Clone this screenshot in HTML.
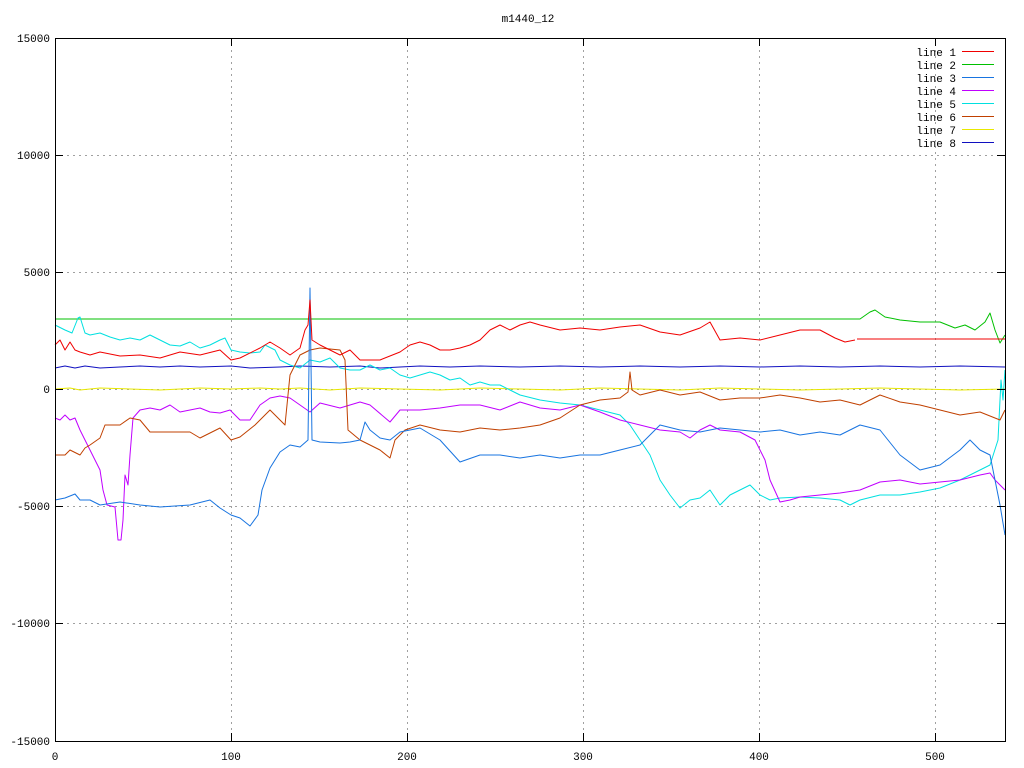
<!DOCTYPE html>
<html><head><style>body{margin:0;background:#fff}svg{display:block}text{font-family:"Liberation Mono",monospace;font-size:11px;fill:#000}</style></head><body>
<svg width="1024" height="768" viewBox="0 0 1024 768" xmlns="http://www.w3.org/2000/svg">
<rect width="1024" height="768" fill="#fff"/>
<g stroke="#a0a0a0" stroke-dasharray="2,4" stroke-width="1">
<line x1="55" y1="155.5" x2="1005" y2="155.5"/><line x1="55" y1="272.5" x2="1005" y2="272.5"/><line x1="55" y1="389.5" x2="1005" y2="389.5"/><line x1="55" y1="506.5" x2="1005" y2="506.5"/><line x1="55" y1="623.5" x2="1005" y2="623.5"/>
<line x1="231.5" y1="38" x2="231.5" y2="741"/><line x1="407.5" y1="38" x2="407.5" y2="741"/><line x1="583.5" y1="38" x2="583.5" y2="741"/><line x1="759.5" y1="38" x2="759.5" y2="741"/><line x1="935.5" y1="38" x2="935.5" y2="741"/>
</g>
<text x="528" y="22" text-anchor="middle">m1440_12</text>
<g text-anchor="end">
<text x="50" y="42">15000</text><text x="50" y="159">10000</text><text x="50" y="276">5000</text><text x="50" y="393">0</text><text x="50" y="510">-5000</text><text x="50" y="627">-10000</text><text x="50" y="745">-15000</text>
</g>
<g text-anchor="middle">
<text x="55" y="760">0</text><text x="231" y="760">100</text><text x="407" y="760">200</text><text x="583" y="760">300</text><text x="759" y="760">400</text><text x="935" y="760">500</text>
</g>
<g fill="none" stroke-width="1" stroke-linejoin="round">
<polyline stroke="#e8e800" points="55,389 70,388 80,390 100,388 130,389 160,390 200,388 231,389 260,388 280,389 300,388 330,390 360,388 400,389 440,390 480,388 520,389 560,390 600,388 640,389 680,390 720,388 760,389 800,390 840,389 880,388 920,389 960,390 1005,389"/>
<polyline stroke="#1010c0" points="55,368 65,366 75,368 85,366 100,368 120,367 140,366 160,367 180,366 200,367 231,366 250,368 280,367 300,366 330,367 360,366 380,368 400,367 420,366 450,367 480,366 520,367 560,366 600,367 640,366 680,367 720,366 760,367 800,366 840,367 880,366 920,367 960,366 1005,367"/>
<polyline stroke="#00c000" points="55,319 860,319 870,312 875,310 885,317 900,320 920,322 940,322 955,328 965,325 975,330 985,322 990,313 995,330 1000,343 1005,335"/>
<polyline stroke="#00e0e0" points="55,325 65,330 72,333 78,318 80,317 85,333 90,335 100,333 110,337 120,340 130,338 140,340 150,335 160,340 170,345 180,346 190,342 200,348 210,345 220,340 225,338 231,350 240,352 250,353 260,352 265,345 275,350 280,360 290,365 300,368 310,360 320,362 330,358 340,368 350,370 360,370 370,365 380,370 390,368 400,375 410,378 420,375 430,372 440,375 450,380 460,378 470,385 480,382 490,385 500,385 510,390 520,395 540,400 560,403 580,405 600,410 620,415 630,425 640,440 650,455 660,480 670,495 680,508 690,500 700,498 710,490 720,505 730,495 740,490 750,485 760,495 770,500 780,498 800,497 820,498 840,500 850,505 860,500 880,495 900,495 920,492 940,488 960,480 980,470 990,465 998,440 1001,380 1003,400 1005,370"/>
<polyline stroke="#c000ff" points="55,418 60,420 65,415 70,420 75,418 80,430 85,440 90,450 100,470 103,490 107,505 115,507 118,540 121,540 123,520 125,475 128,485 130,455 133,418 140,410 150,408 160,410 170,405 180,412 200,408 210,412 220,413 230,410 240,420 250,420 260,405 270,398 280,396 290,398 300,405 310,412 320,403 340,408 350,405 360,402 370,405 390,422 400,410 420,410 440,408 460,405 480,405 500,410 520,402 540,408 560,410 580,405 600,412 620,420 640,425 660,430 680,432 690,438 700,430 710,425 720,430 740,432 755,440 765,460 770,480 780,502 790,500 800,497 820,495 840,493 860,490 880,482 900,480 920,484 940,482 960,480 980,475 990,473 995,480 1000,485 1005,490"/>
<polyline stroke="#c04000" points="55,455 65,455 70,450 80,455 85,448 90,445 100,438 105,425 120,425 130,418 140,420 150,432 170,432 190,432 200,438 220,428 231,440 240,437 255,425 270,410 285,425 290,375 300,355 310,350 320,348 340,350 345,360 348,430 360,440 380,450 390,458 395,440 405,430 420,425 440,430 460,432 480,428 500,430 520,428 540,425 560,418 580,405 600,400 620,398 628,392 630,372 632,390 640,395 660,390 680,395 700,392 720,400 740,398 760,398 780,395 800,398 820,402 840,400 860,405 880,395 900,402 920,405 940,410 960,415 980,412 1000,420 1005,410"/>
<polyline stroke="#1874e0" points="55,500 65,498 75,494 80,500 90,500 100,505 120,502 140,505 160,507 190,505 210,500 220,508 231,515 240,518 250,526 258,515 262,490 270,468 280,452 290,445 300,447 308,440 310,288 312,440 320,442 340,443 350,442 360,440 365,422 370,430 380,438 390,440 400,432 420,428 440,440 460,462 480,455 500,455 520,458 540,455 560,458 580,455 600,455 620,450 640,445 660,425 680,430 700,432 720,428 740,430 760,432 780,430 800,435 820,432 840,435 860,425 880,430 900,455 920,470 940,465 960,450 970,440 980,450 990,455 1000,505 1005,535"/>
<polyline stroke="#f00000" points="55,345 60,340 65,350 70,342 75,350 80,352 90,355 100,352 120,356 140,355 160,358 180,352 200,355 220,350 231,360 240,358 260,348 270,342 280,348 290,355 300,348 305,330 308,325 310,300 312,340 320,345 340,355 350,350 360,360 380,360 400,352 410,345 420,342 430,345 440,350 450,350 460,348 470,345 480,340 490,330 500,325 510,330 520,325 530,322 540,325 560,330 580,328 600,330 620,327 640,325 660,332 680,335 700,328 710,322 720,340 740,338 760,340 780,335 800,330 820,330 835,338 845,342 855,340"/>
<polyline stroke="#f00000" points="857,339 1005,339"/>
</g>
<rect x="55.5" y="38.5" width="950" height="703" fill="none" stroke="#000"/>
<g stroke="#000">
<line x1="55" y1="155.5" x2="63" y2="155.5"/><line x1="55" y1="272.5" x2="63" y2="272.5"/><line x1="55" y1="389.5" x2="63" y2="389.5"/><line x1="55" y1="506.5" x2="63" y2="506.5"/><line x1="55" y1="623.5" x2="63" y2="623.5"/>
<line x1="997" y1="155.5" x2="1005" y2="155.5"/><line x1="997" y1="272.5" x2="1005" y2="272.5"/><line x1="997" y1="389.5" x2="1005" y2="389.5"/><line x1="997" y1="506.5" x2="1005" y2="506.5"/><line x1="997" y1="623.5" x2="1005" y2="623.5"/>
<line x1="231.5" y1="38" x2="231.5" y2="46"/><line x1="407.5" y1="38" x2="407.5" y2="46"/><line x1="583.5" y1="38" x2="583.5" y2="46"/><line x1="759.5" y1="38" x2="759.5" y2="46"/><line x1="935.5" y1="38" x2="935.5" y2="46"/>
<line x1="231.5" y1="733" x2="231.5" y2="741"/><line x1="407.5" y1="733" x2="407.5" y2="741"/><line x1="583.5" y1="733" x2="583.5" y2="741"/><line x1="759.5" y1="733" x2="759.5" y2="741"/><line x1="935.5" y1="733" x2="935.5" y2="741"/>
</g>
<g text-anchor="end">
<text x="956" y="56">line 1</text><text x="956" y="69">line 2</text><text x="956" y="82">line 3</text><text x="956" y="95">line 4</text><text x="956" y="108">line 5</text><text x="956" y="121">line 6</text><text x="956" y="134">line 7</text><text x="956" y="147">line 8</text>
</g>
<g stroke-width="1">
<line x1="962" y1="51.5" x2="994" y2="51.5" stroke="#f00000"/>
<line x1="962" y1="64.5" x2="994" y2="64.5" stroke="#00c000"/>
<line x1="962" y1="77.5" x2="994" y2="77.5" stroke="#1874e0"/>
<line x1="962" y1="90.5" x2="994" y2="90.5" stroke="#c000ff"/>
<line x1="962" y1="103.5" x2="994" y2="103.5" stroke="#00e0e0"/>
<line x1="962" y1="116.5" x2="994" y2="116.5" stroke="#c04000"/>
<line x1="962" y1="129.5" x2="994" y2="129.5" stroke="#e8e800"/>
<line x1="962" y1="142.5" x2="994" y2="142.5" stroke="#1010c0"/>
</g>
</svg>
</body></html>
